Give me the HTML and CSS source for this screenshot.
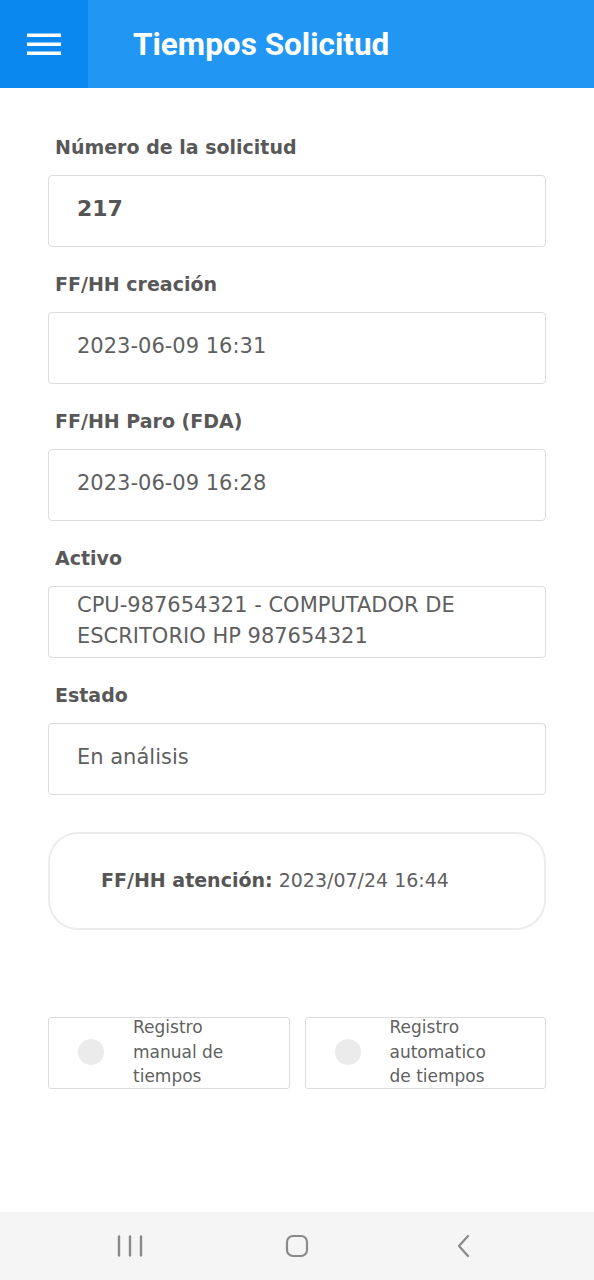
FILE: index.html
```html
<!DOCTYPE html>
<html lang="es">
<head>
<meta charset="utf-8">
<title>Tiempos Solicitud</title>
<link rel="stylesheet" href="styles.css">
</head>
<body>
<header class="appbar">
  <div class="menu">
    <svg width="34" height="24" viewBox="0 0 34 24"><rect x="0" y="1.5" width="34" height="3.5" fill="#fff"/><rect x="0" y="10.5" width="34" height="3.5" fill="#fff"/><rect x="0" y="19.5" width="34" height="3.5" fill="#fff"/></svg>
  </div>
  <h1 class="title">Tiempos Solicitud</h1>
</header>
<main class="content">
  <div class="field">
    <div class="label">Número de la solicitud</div>
    <div class="input strong">217</div>
  </div>
  <div class="field">
    <div class="label">FF/HH creación</div>
    <div class="input">2023-06-09 16:31</div>
  </div>
  <div class="field">
    <div class="label">FF/HH Paro (FDA)</div>
    <div class="input">2023-06-09 16:28</div>
  </div>
  <div class="field">
    <div class="label">Activo</div>
    <div class="input multi">CPU-987654321 - COMPUTADOR DE ESCRITORIO HP 987654321</div>
  </div>
  <div class="field">
    <div class="label">Estado</div>
    <div class="input">En análisis</div>
  </div>
  <div class="card"><b>FF/HH atención:</b> 2023/07/24 16:44</div>
  <div class="options">
    <div class="option"><span class="dot"></span><span class="opt-text">Registro manual de tiempos</span></div>
    <div class="option"><span class="dot"></span><span class="opt-text">Registro automatico de tiempos</span></div>
  </div>
</main>
<nav class="sysnav">
  <svg width="26" height="24" viewBox="0 0 26 24"><g stroke="#8a8a8a" stroke-width="2.4" stroke-linecap="round"><line x1="2" y1="2.5" x2="2" y2="21.5"/><line x1="13" y1="2.5" x2="13" y2="21.5"/><line x1="24" y1="2.5" x2="24" y2="21.5"/></g></svg>
  <svg width="24" height="24" viewBox="0 0 24 24"><rect x="2" y="2" width="20" height="20" rx="6" fill="none" stroke="#8a8a8a" stroke-width="2.2"/></svg>
  <svg width="16" height="24" viewBox="0 0 16 24"><polyline points="12,2 3,12 12,22" fill="none" stroke="#8a8a8a" stroke-width="2.2" stroke-linecap="round" stroke-linejoin="round"/></svg>
</nav>
</body>
</html>
```

FILE: styles.css
```css
* { box-sizing: border-box; }
html, body { margin: 0; padding: 0; }
body {
  width: 594px;
  min-height: 1280px;
  display: flex;
  flex-direction: column;
  background: #fff;
  font-family: "DejaVu Sans", "Noto Sans", sans-serif;
  color: #5a5a5a;
}
.appbar {
  height: 88px;
  display: flex;
  align-items: stretch;
  background: #2196f3;
}
.menu {
  width: 88px;
  background: #0a88f0;
  display: flex;
  align-items: center;
  justify-content: center;
}
.title {
  margin: 0;
  padding-left: 45px;
  display: flex;
  align-items: center;
  font-family: Roboto, "Liberation Sans", sans-serif;
  font-weight: 700;
  font-size: 31.5px;
  color: #fff;
}
.content {
  flex: 1;
  padding: 46px 48px 0 48px;
}
.field { margin-bottom: 24px; }
.label {
  padding-left: 7px;
  height: 27px;
  line-height: 27px;
  margin-bottom: 14px;
  font-size: 19px;
  font-weight: 700;
  color: #585858;
}
.input {
  height: 72px;
  border: 1px solid #dcdcdc;
  border-radius: 4px;
  padding: 0 28px 4px 28px;
  display: flex;
  align-items: center;
  font-size: 21px;
  color: #5f5f5f;
}
.input.strong { font-weight: 700; color: #555; font-size: 22px; padding-bottom: 6px; }
.input.multi { line-height: 31px; padding-bottom: 2px; }
.card {
  margin-top: 37px;
  height: 98px;
  border: 2px solid #ececec;
  border-radius: 30px;
  padding: 0 0 2px 51px;
  display: flex;
  align-items: center;
  font-size: 19px;
  color: #5f5f5f;
  white-space: pre;
}
.card b { font-weight: 700; color: #555; }
.options {
  margin-top: 87px;
  display: flex;
  gap: 15px;
}
.option {
  flex: 1;
  height: 72px;
  border: 1px solid #dcdcdc;
  border-radius: 3px;
  display: flex;
  align-items: center;
  padding: 0 0 2px 29px;
}
.dot {
  flex: none;
  width: 26px;
  height: 26px;
  border-radius: 50%;
  background: #ebebeb;
  margin-right: 29px;
}
.opt-text {
  font-size: 17px;
  line-height: 24.5px;
  color: #5f5f5f;
  width: 118px;
}
.sysnav {
  height: 68px;
  background: #f5f5f5;
  display: flex;
  align-items: center;
  padding-left: 117px;
}
.sysnav svg:nth-child(1) { margin-right: 142px; }
.sysnav svg:nth-child(2) { margin-right: 147px; }
```
